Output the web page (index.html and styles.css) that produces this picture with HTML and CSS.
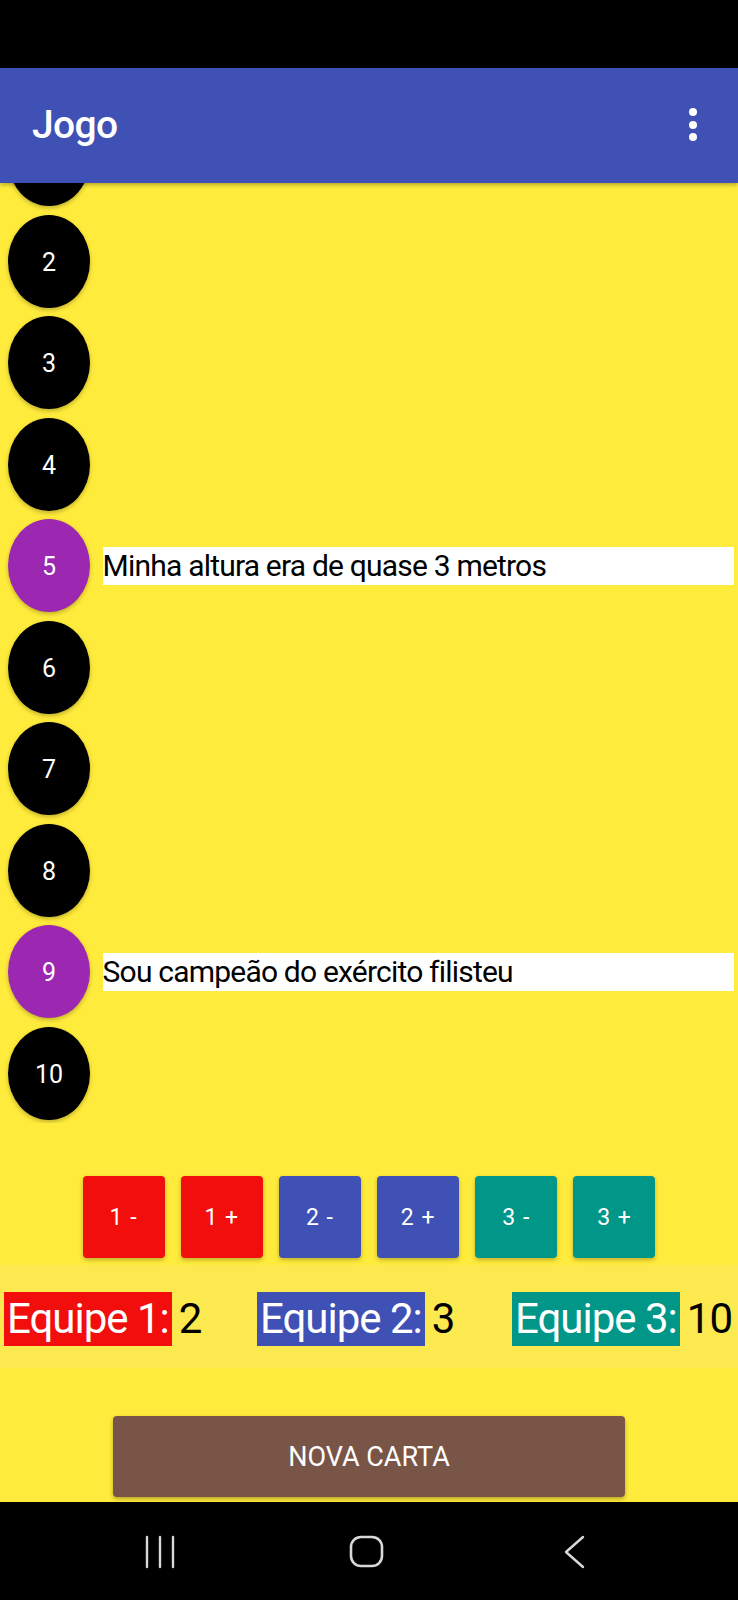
FILE: index.html
```html
<!DOCTYPE html>
<html lang="pt">
<head>
<meta charset="utf-8">
<title>Jogo</title>
<link rel="stylesheet" href="styles.css">
</head>
<body>
<div class="phone">
  <div class="status"></div>
  <header class="appbar">
    <h1 class="title">Jogo</h1>
    <div class="menu" aria-label="Mais opções">
      <span class="dot"></span><span class="dot"></span><span class="dot"></span>
    </div>
  </header>
  <main class="content">
    <div class="list">
      <div class="rows">
        <div class="row"><div class="num black"></div></div>
        <div class="row"><div class="num black">2</div></div>
        <div class="row"><div class="num black">3</div></div>
        <div class="row"><div class="num black">4</div></div>
        <div class="row"><div class="num purple">5</div><div class="clue">Minha altura era de quase 3 metros</div></div>
        <div class="row"><div class="num black">6</div></div>
        <div class="row"><div class="num black">7</div></div>
        <div class="row"><div class="num black">8</div></div>
        <div class="row"><div class="num purple">9</div><div class="clue">Sou campeão do exército filisteu</div></div>
        <div class="row"><div class="num black">10</div></div>
      </div>
    </div>
    <div class="buttons">
      <button class="btn red">1 -</button>
      <button class="btn red">1 +</button>
      <button class="btn blue">2 -</button>
      <button class="btn blue">2 +</button>
      <button class="btn teal">3 -</button>
      <button class="btn teal">3 +</button>
    </div>
    <div class="band">
      <div class="team"><span class="label red">Equipe 1:</span><span class="score">2</span></div>
      <div class="team"><span class="label blue">Equipe 2:</span><span class="score">3</span></div>
      <div class="team"><span class="label teal">Equipe 3:</span><span class="score">10</span></div>
    </div>
    <div class="bottom">
      <button class="nova">NOVA CARTA</button>
    </div>
  </main>
  <nav class="navbar">
    <svg class="nav-icon" width="32" height="34" viewBox="0 0 32 34">
      <path d="M3 2 V32 M16 2 V32 M29 2 V32" stroke="#d8d8d8" stroke-width="2.4" stroke-linecap="round" fill="none"/>
    </svg>
    <svg class="nav-icon" width="36" height="34" viewBox="0 0 36 34">
      <rect x="2" y="2" width="31" height="29" rx="10" ry="10" stroke="#d8d8d8" stroke-width="2.6" fill="none"/>
    </svg>
    <svg class="nav-icon" width="24" height="34" viewBox="0 0 24 34">
      <path d="M21 2 L4 17 L21 32" stroke="#d8d8d8" stroke-width="2.4" stroke-linecap="round" stroke-linejoin="round" fill="none"/>
    </svg>
  </nav>
</div>
</body>
</html>
```

FILE: styles.css
```css
* { box-sizing: border-box; }
html, body { margin: 0; padding: 0; }
body {
  width: 738px;
  height: 1600px;
  overflow: hidden;
  font-family: Roboto, "Noto Sans", "Liberation Sans", sans-serif;
  background: #000;
}
.phone {
  width: 738px;
  height: 1600px;
  display: flex;
  flex-direction: column;
}
.status {
  height: 68px;
  background: #000;
  flex-shrink: 0;
}
.appbar {
  position: relative;
  z-index: 2;
  height: 115px;
  flex-shrink: 0;
  background: #3f51b5;
  display: flex;
  align-items: center;
  justify-content: space-between;
  padding: 0 41px 0 32px;
  box-shadow: 0 2px 4px rgba(0,0,0,0.28);
}
.title {
  margin: 0;
  color: #fff;
  font-size: 39px;
  font-weight: 500;
  letter-spacing: -0.6px;
  line-height: 1;
  padding-bottom: 0;
}
.menu {
  display: flex;
  flex-direction: column;
  gap: 4.5px;
  padding-bottom: 2px;
}
.dot {
  width: 8px;
  height: 8px;
  border-radius: 50%;
  background: #fff;
}
.content {
  height: 1319px;
  flex-shrink: 0;
  background: #ffeb3b;
  display: flex;
  flex-direction: column;
}
.list {
  height: 940px;
  overflow: hidden;
  flex-shrink: 0;
}
.rows {
  margin-top: -74px;
}
.row {
  height: 101.5px;
  display: flex;
  align-items: center;
}
.num {
  width: 82px;
  height: 93px;
  margin-left: 8px;
  flex-shrink: 0;
  border-radius: 50%;
  display: flex;
  align-items: center;
  justify-content: center;
  color: #fff;
  font-size: 25px;
  padding-top: 2px;
  box-shadow: 0 2px 4px rgba(0,0,0,0.25);
}
.num.black { background: #000; }
.num.purple { background: #9c27b0; }
.clue {
  flex: 1;
  margin-left: 12.6px;
  margin-right: 4px;
  height: 38px;
  background: #fff;
  color: #000;
  font-size: 30px;
  letter-spacing: -0.8px;
  line-height: 38px;
  white-space: nowrap;
}
.buttons {
  margin-top: 53px;
  display: flex;
  justify-content: center;
  gap: 16.2px;
}
.btn {
  width: 82px;
  height: 82px;
  border: none;
  border-radius: 4px;
  color: #fff;
  font-family: inherit;
  font-size: 23px;
  letter-spacing: 1px;
  padding: 0;
  box-shadow: 0 2px 4px rgba(0,0,0,0.25);
}
.red { background: #f30e0e; }
.blue { background: #3f51b5; }
.teal { background: #009688; }
.band {
  margin-top: 7px;
  height: 103px;
  background: #fce84f;
  display: grid;
  grid-template-columns: 253px 255px 1fr;
  padding: 27px 0 0 4px;
}
.team {
  display: flex;
  align-items: flex-start;
  height: 54px;
}
.label {
  height: 54px;
  line-height: 54px;
  color: #fff;
  font-size: 42px;
  letter-spacing: -1px;
  padding: 0 3px 0 3px;
}
.score {
  height: 54px;
  line-height: 54px;
  font-size: 42px;
  color: #000;
  margin-left: 7px;
  letter-spacing: -1px;
}
.bottom {
  margin-top: 48px;
  display: flex;
  justify-content: center;
}
.nova {
  width: 512px;
  height: 81px;
  border: none;
  border-radius: 4px;
  background: #795548;
  color: #fff;
  font-family: inherit;
  font-size: 27px;
  letter-spacing: 0;
  box-shadow: 0 2px 4px rgba(0,0,0,0.3);
}
.navbar {
  flex: 1;
  background: #000;
  display: flex;
  align-items: flex-start;
  padding-top: 33px;
}
.nav-icon:nth-child(1) { margin-left: 144px; }
.nav-icon:nth-child(2) { margin-left: 173px; }
.nav-icon:nth-child(3) { margin-left: 177px; }
```
